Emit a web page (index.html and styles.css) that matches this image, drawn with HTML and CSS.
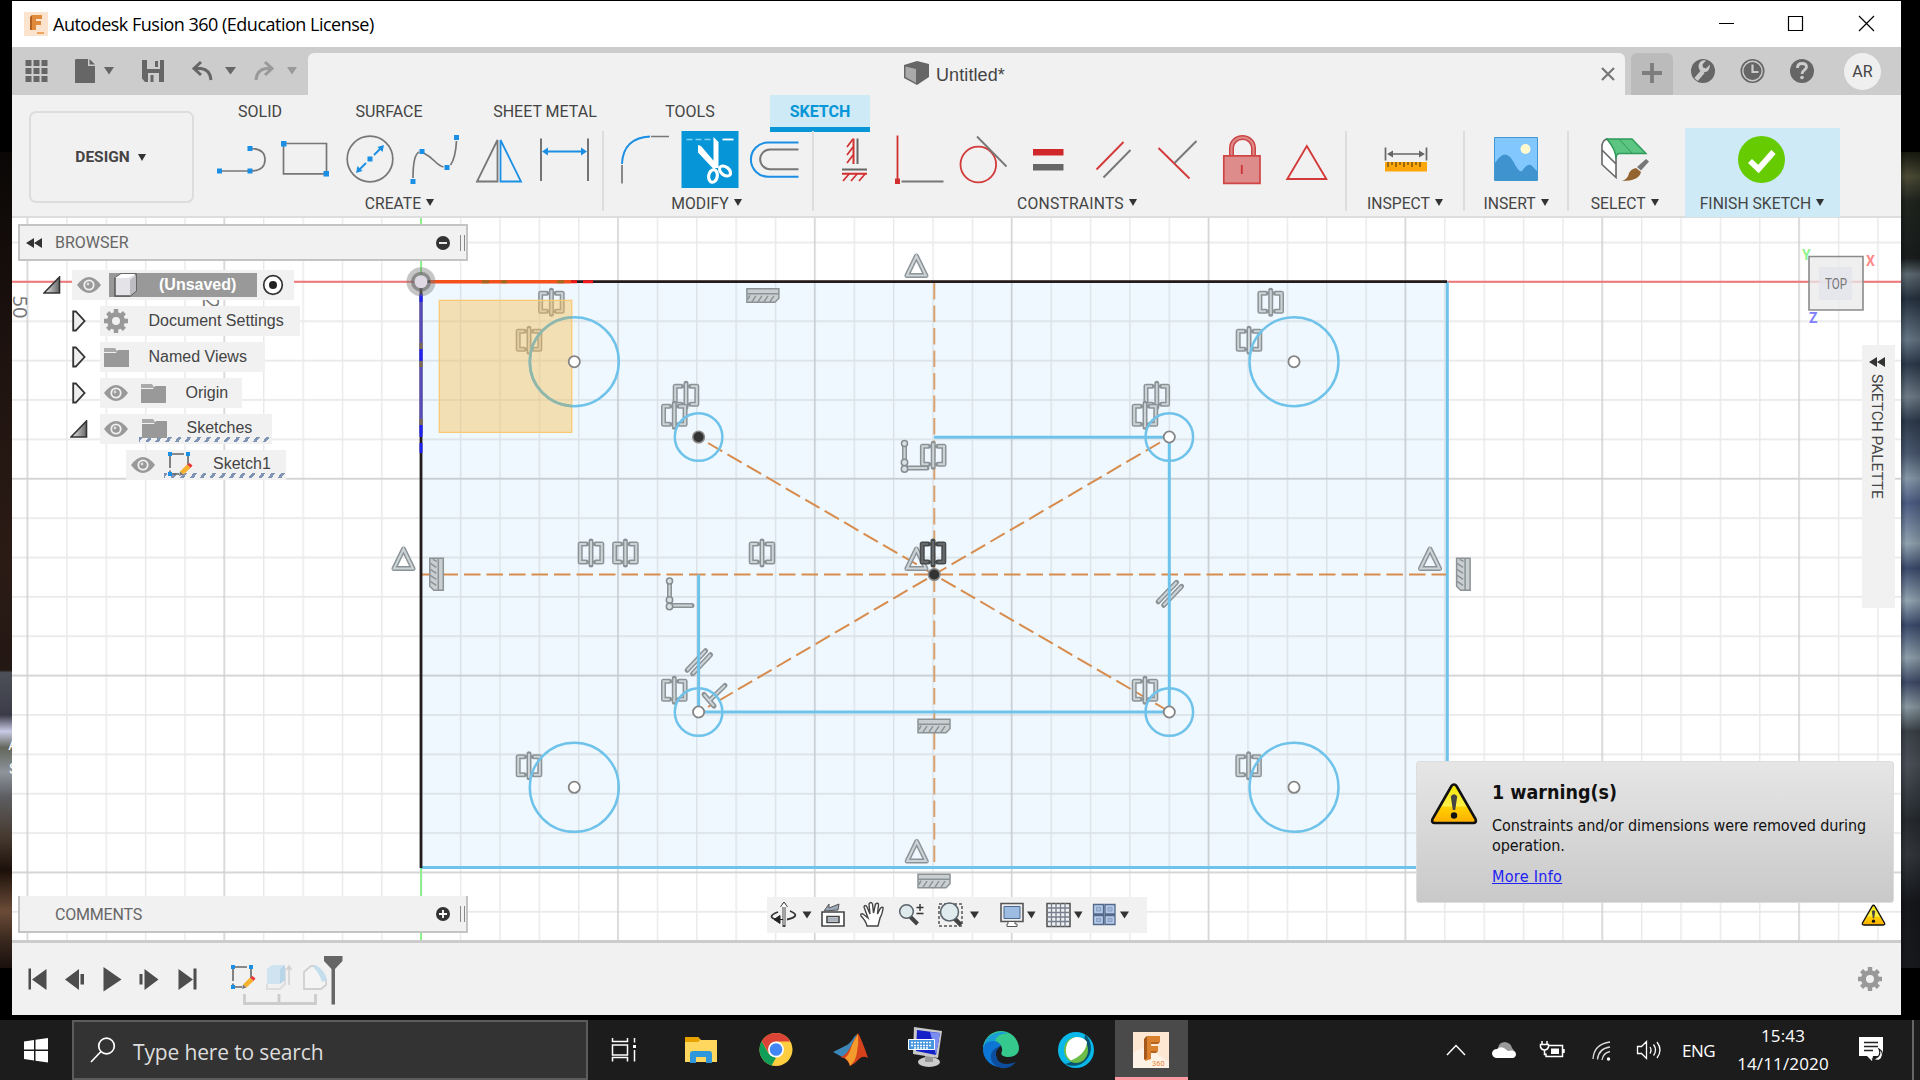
FILE: index.html
```html
<!DOCTYPE html>
<html lang="en">
<head>
<meta charset="utf-8">
<title>Autodesk Fusion 360</title>
<link rel="stylesheet" href="styles.css">
</head>
<body>
<svg class="defs" width="0" height="0" aria-hidden="true">
<defs>
  <linearGradient id="warnFill" x1="0" y1="0" x2="0" y2="1"><stop offset="0" stop-color="#f2e400"/><stop offset=".55" stop-color="#fff04a"/><stop offset=".6" stop-color="#ffd000"/><stop offset="1" stop-color="#ffae00"/></linearGradient>
  <linearGradient id="tri" x1="0" y1="0" x2="1" y2="0"><stop offset="0" stop-color="#eee"/><stop offset="1" stop-color="#666"/></linearGradient>
  <symbol id="eye" viewBox="0 0 24 16"><path d="M0 8Q6 0 12 0T24 8Q18 16 12 16T0 8Z" fill="#999"/><circle cx="12" cy="8" r="5.6" fill="#f1f1f1"/><circle cx="12" cy="8" r="3.8" fill="#999"/><circle cx="11" cy="7" r="1.4" fill="#ddd"/></symbol>
  <symbol id="folder" viewBox="0 0 25 20"><path d="M0 1h11l2 3v1H0Z" fill="#aaa"/><path d="M0 6h12l2-3h11v17H0Z" fill="#999"/></symbol>
  <symbol id="gear" viewBox="-12 -12 24 24"><circle r="6.5" fill="none" stroke="#999" stroke-width="5"/><g stroke="#999" stroke-width="4.4"><path d="M0-12v4M0 12v-4M-12 0h4M12 0h-4M-8.4-8.4l3 3M8.4 8.4l-3-3M-8.4 8.4l3-3M8.4-8.4l-3 3"/></g></symbol>
  <symbol id="closed" viewBox="0 0 14 22"><path d="M1.2 1.5h2.6L12.6 11 3.8 20.500H1.200Z" fill="#eee" stroke="#333" stroke-width="1.8"/></symbol>
  <symbol id="open" viewBox="0 0 18 18"><path d="M1 17 16.500 1V17Z" fill="url(#tri)" stroke="#333" stroke-width="1.600"/></symbol>
  <symbol id="warn" viewBox="0 0 48 43"><path d="M24 2.500Q25.500 2.500 26.500 4L45.500 37Q47 41 43 41H5Q1 41 2.500 37L21.500 4Q22.500 2.500 24 2.500Z" fill="url(#warnFill)" stroke="#111" stroke-width="2.600"/><path d="M20.800 14.500Q24 10 27.200 14.500L25.200 28H22.800Z" fill="#444"/><circle cx="24" cy="33.500" r="3.200" fill="#111"/></symbol>
  <symbol id="sketchico" viewBox="0 0 25 25"><path d="M2 2h18M2 2v20M20 2v12M2 22h9" fill="none" stroke="#666" stroke-width="1.600" stroke-dasharray="14 2.500"/><path d="M0 0h4v4H0ZM18 0h4v4h-4ZM0 20h4v4H0Z" fill="#1a8fe3"/><path d="M12 19.500 19 12.500 22.500 16 15.500 22.500Z" fill="#f9b22d"/><path d="M19.500 12.500 21.500 11 24.500 13.500 22.500 16Z" fill="#e33"/><path d="M12 19.500 15.500 22.500 11 24Z" fill="#777"/></symbol>
  <symbol id="rewind" viewBox="0 0 16 10"><path d="M8 0V10L0 5ZM16 0V10L8 5Z" fill="#333"/></symbol>
  <g id="sym"><path class="go" d="M-4.800-9H-10.800V9H-4.800M4.800-9H10.800V9H4.800M0-12V12"/><path class="gi" d="M-4.800-9H-10.800V9H-4.800M4.800-9H10.800V9H4.800M0-12V12"/></g>
  <g id="mid"><path class="go" d="M0-9.500 9.500 10H-9.500Z"/><path class="gi" d="M0-9.500 9.500 10H-9.500Z"/></g>
  <g id="hor"><path d="M-16-6.500H16V3L12 7H-16Z" fill="#c9cfd1" stroke="#8b9396" stroke-width="1.500"/><path d="M-16-1.500H16M-11 6.500l4-6M-5 6.500l4-6M1 6.500l4-6M7 6.500l4-6M-15 4l2-4" stroke="#8b9396" stroke-width="1.500"/></g>
  <g id="lshape"><path class="go" d="M-10-13V7M-10 11.500H12.500"/><path class="gi" d="M-10-13V7M-10 11.500H12.500"/><g fill="#d8e0e3" stroke="#858d90" stroke-width="1.500"><circle cx="-10" cy="-13" r="3"/><circle cx="-10" cy="6" r="3.200"/><circle cx="-10" cy="12.500" r="3.200"/></g></g>
  <g id="par"><path class="go" d="M-11.500 8.500 7-11M-6 12 12-7"/><path class="gi" d="M-11.500 8.500 7-11M-6 12 12-7"/></g>
  <g id="perp"><path class="go" d="M-10-2.500 0 9M-4 3 11-11.500"/><path class="gi" d="M-10-2.500 0 9M-4 3 11-11.500"/></g>
  <pattern id="minor" x="26.800" y="5.400" width="39.370" height="39.370" patternUnits="userSpaceOnUse"><path d="M.6 0V39.370M0 .9H39.370" stroke="#000" stroke-opacity=".085" stroke-width="1.600"/></pattern>
  <pattern id="major" x="26.400" y="84.100" width="196.850" height="196.850" patternUnits="userSpaceOnUse"><path d="M.9 0V196.850M0 .9H196.850" stroke="#000" stroke-opacity=".1" stroke-width="1.600"/></pattern>
</defs>
</svg>

<div class="desktop">
  <div class="wall wall-left"><span>A</span><span>S</span></div>
  <main class="window">
    <header class="titlebar">
      <svg class="app-icon" width="24" height="24" viewBox="0 0 24 24"><rect width="24" height="24" fill="#fbe3cd"/><path d="M8 3h10v4h-6v2h5v4h-5v5H7V5Z" fill="#e08a3c"/><path d="M8 3v15H6V5Z" fill="#b5601c"/><path d="M13 20h7v2h-7Z" fill="#f0a45c"/></svg>
      <h1>Autodesk Fusion 360 (Education License)</h1>
      <svg class="winctl" width="190" height="46" viewBox="1711 1 190 46" fill="none" stroke="#000" stroke-width="1.200"><path d="M1719 23.500h15M1788.500 16.500h14v14h-14ZM1859 16l15 15M1874 16l-15 15"/></svg>
    </header>

    <div class="tabbar">
      <svg width="296" height="48" viewBox="12 47 296 48" fill="#666"><path d="M25.500 60h6v6h-6Zm8 0h6v6h-6Zm8 0h6v6h-6Zm-16 8h6v6h-6Zm8 0h6v6h-6Zm8 0h6v6h-6Zm-16 8h6v6h-6Zm8 0h6v6h-6Zm8 0h6v6h-6Z"/><path d="M76 59h12v7h7v17H75V60ZM89.500 59l5.500 5.500h-5.500Z"/><path d="M104 67h10l-5 7.500ZM225 67h11l-5.500 7.500Z"/><path fill-rule="evenodd" d="M142 60h22v22h-19l-3-3.500ZM147 60v9h13v-9ZM148 73v9h11v-9ZM155 61v6h3v-6ZM150.500 75h3v7h-3Z"/><g fill="none" stroke="#666" stroke-width="3"><path d="M201 62l-7 6.500 7 6.500M194 68.500h7q9 1 10 11.500"/><path stroke="#999" d="M265 62l7 6.500-7 6.500M272 68.500h-6q-9 1-10 11.500"/></g><path d="M287 67h10l-5 7.500Z" fill="#999"/></svg>
      <div class="doc-tab">
        <svg class="cube" width="25" height="24" viewBox="0 0 25 24"><path d="M0 4 13 0 25 3V16L13 24 0 17Z" fill="#666"/><path d="M1.500 5.500 12 8V22L1.500 16Z" fill="#aaa"/></svg>
        <span>Untitled*</span>
        <svg class="tab-x" width="14" height="14" viewBox="0 0 14 14"><path d="M1 1l12 12M13 1 1 13" stroke="#777" stroke-width="2.200"/></svg>
      </div>
      <div class="new-tab"><svg width="20" height="20" viewBox="0 0 20 20"><path d="M10 0v20M0 10h20" stroke="#7d7d7d" stroke-width="3.800"/></svg></div>
      <svg width="146" height="48" viewBox="1685 47 146 48"><circle cx="1703" cy="71" r="12" fill="#666"/><path d="M1696 79.500l7-8" stroke="#ccc" stroke-width="4.500"/><path d="M1710 64.500l-4 4-3-1-.5-3 3.500-4q-6-1-7.500 5 0 6 5 6.500 6 1 6.500-7.500Z" fill="#ccc"/><circle cx="1752.500" cy="71" r="11.200" fill="none" stroke="#666" stroke-width="1.600"/><circle cx="1752.500" cy="71" r="9" fill="#666"/><path d="M1752.500 64.500v7.500h6" fill="none" stroke="#ccc" stroke-width="2.200"/><circle cx="1802" cy="71" r="12" fill="#666"/><path d="M1797.500 68q0-4.500 4.500-4.500t4.500 3.500c0 3-4.500 3-4.500 7" fill="none" stroke="#ccc" stroke-width="2.800"/><circle cx="1802" cy="77.500" r="1.800" fill="#ccc"/></svg>
      <div class="avatar">AR</div>
    </div>

    <section class="ribbon">
      <div class="workspace">DESIGN<i class="caret"></i></div>
      <div class="ribbon-main">
        <nav class="ribbon-tabs"><span class="t1">SOLID</span><span class="t2">SURFACE</span><span class="t3">SHEET METAL</span><span class="t4">TOOLS</span><span class="t5">SKETCH</span></nav>
        <div class="groups">
          <div class="group create">
            <div class="icons">
              <svg viewBox="210 131 64.500 57"><path d="M220 171h28M250 148.500q15 0 15 11.200T250 171" fill="none" stroke="#777" stroke-width="1.700"/><path d="M217 168.500h5v5h-5ZM247.500 168.500h5v5h-5ZM247.500 146h5v5h-5Z" fill="#1a8fe3"/></svg>
              <svg viewBox="274.500 131 64.500 57"><path d="M284 143.500h43v30.300h-43Z" fill="none" stroke="#777" stroke-width="1.700"/><path d="M281.500 141h5.500v5.500h-5.500ZM324 171h5.500v5.500H324Z" fill="#1a8fe3"/></svg>
              <svg viewBox="339 131 64.500 57"><circle cx="370" cy="159" r="22.800" fill="none" stroke="#777" stroke-width="1.700"/><path d="M359 170l7-7M374 155l7-7" stroke="#1a8fe3" stroke-width="1.800"/><path d="M384 145l-1.500 7-5-5ZM356 173l1.500-7 5 5ZM367.500 156.500h5v5h-5Z" fill="#1a8fe3"/></svg>
              <svg viewBox="403.500 131 64.500 57"><path d="M413.500 178q0-23 6-26M424 153q6 3 11 8t9 6M451 165q5-7 6-24" fill="none" stroke="#777" stroke-width="1.700"/><path d="M411 179h5v5h-5ZM420 149h5v5h-5ZM445 165h5v5h-5ZM454.500 135h5v5h-5Z" fill="#1a8fe3"/></svg>
              <svg viewBox="468 131 64.500 57" fill="none" stroke-width="1.800"><path d="M497.500 140V181.500h-20.500Z" stroke="#777"/><path d="M500.500 140V181.500H521Z" stroke="#1a8fe3"/></svg>
              <svg viewBox="532 131 64.500 57"><path d="M541 138.500V181M588 138.500V181" stroke="#666" stroke-width="1.800"/><path d="M545 151.500h39" stroke="#1a8fe3" stroke-width="1.800"/><path d="M542 151.500l6-4v8ZM587 151.500l-6-4v8Z" fill="#1a8fe3"/></svg>
            </div>
            <div class="label">CREATE<i class="caret"></i></div>
          </div>
          <div class="group modify">
            <div class="icons">
              <svg viewBox="613 131 64.500 57" fill="none"><path d="M622 165V183.500M651 136.500h18" stroke="#777" stroke-width="1.700"/><path d="M622 164q1-26 28-27.500" stroke="#1a8fe3" stroke-width="1.900"/></svg>
              <svg viewBox="677.500 131 64.500 57"><path d="M681 131h57v57h-57Z" fill="#0696d7"/><path d="M686 139.500h28" stroke="#7fd0f5" stroke-width="1.600" stroke-dasharray="6 3"/><path d="M722 139.500h11" stroke="#fff" stroke-width="1.800"/><path d="M713 137l5 5v26h-5ZM697.500 145l3 1 17 20-4 3.500-16-17Z" fill="#fff"/><g fill="none" stroke="#fff" stroke-width="3.200"><ellipse cx="712.500" cy="176" rx="4.300" ry="6.300" transform="rotate(10 712.500 176)"/><ellipse cx="724.500" cy="171" rx="4" ry="6.300" transform="rotate(-52 724.500 171)"/></g></svg>
              <svg viewBox="742 131 64.500 57" fill="none"><path d="M798.500 142.500H768a17 17 0 0 0 0 34.200h30.500" stroke="#1a8fe3" stroke-width="2"/><path d="M798.500 149.500H770a9.800 9.800 0 0 0 0 19.700h28.500" stroke="#777" stroke-width="2"/></svg>
            </div>
            <div class="label">MODIFY<i class="caret"></i></div>
          </div>
          <div class="group constraints">
            <div class="icons">
              <svg viewBox="822 131 64.500 57" fill="none"><path d="M853.500 138.500V164M842 173.800h25" stroke="#d0302f" stroke-width="2"/><path d="M857.500 138.500V164M842 169.500h25" stroke="#666" stroke-width="2"/><path d="M853 139l-6 8M853 147l-6 8M853 155l-6 8M849 174l-6 7M857 174l-6 7M865 174l-6 7" stroke="#d0302f" stroke-width="1.700"/></svg>
              <svg viewBox="886.500 131 64.500 57"><path d="M898 135.500V179" stroke="#d0302f" stroke-width="1.800"/><path d="M902 181.500h42" stroke="#777" stroke-width="1.800"/><path d="M895.500 178.500h5v5.500h-5Z" fill="#d0302f"/></svg>
              <svg viewBox="951 131 64.500 57" fill="none"><circle cx="978.300" cy="164.500" r="17.800" stroke="#d33a3a" stroke-width="1.800"/><path d="M977 136.500l29.500 30" stroke="#777" stroke-width="1.800"/></svg>
              <svg viewBox="1015.500 131 64.500 57"><path d="M1033.500 149h30.500v6.500h-30.500Z" fill="#d0282a"/><path d="M1033.500 164h30.500v6.500h-30.500Z" fill="#666"/></svg>
              <svg viewBox="1080 131 64.500 57" stroke-width="1.900"><path d="M1096.500 169.500l27-27.500" stroke="#d33a3a"/><path d="M1103.500 177.500l27-27.500" stroke="#777"/></svg>
              <svg viewBox="1144.500 131 64.500 57" stroke-width="1.900"><path d="M1159 148l31 30.500" stroke="#d33a3a"/><path d="M1175 163l22-22" stroke="#777"/></svg>
              <svg viewBox="1209 131 64.500 57"><path d="M1231.500 156V148a11 10.500 0 0 1 22 0v8" fill="none" stroke="#cc4444" stroke-width="5"/><path d="M1231.500 156V148a11 10.500 0 0 1 22 0v8" fill="none" stroke="#df8a8a" stroke-width="2"/><path d="M1223.800 155.800h36.200v27.500h-36.200Z" fill="#de8b8b" stroke="#d04545" stroke-width="1.700"/><path d="M1241.800 165v9" stroke="#c33" stroke-width="1.800"/></svg>
              <svg viewBox="1273 131 64.500 57"><path d="M1306.800 146l19.500 33h-39Z" fill="none" stroke="#d33a3a" stroke-width="1.900"/></svg>
            </div>
            <div class="label">CONSTRAINTS<i class="caret"></i></div>
          </div>
          <div class="group inspect">
            <div class="icons"><svg viewBox="1373 131 64.500 57"><path d="M1385.500 147.500v13M1426.500 147.500v13M1389 154h34" stroke="#666" stroke-width="1.700"/><path d="M1387 154l6-3.500v7ZM1425 154l-6-3.500v7Z" fill="#666"/><path d="M1385 162h42v9.500h-42Z" fill="#ffa60a"/><path d="M1388 162v5m4-5v3m4-3v5m4-5v3m4-3v5m4-5v3m4-3v5m4-5v3m4-3v5" stroke="#6a4a10" stroke-width="1.300"/></svg></div>
            <div class="label">INSPECT<i class="caret"></i></div>
          </div>
          <div class="group insert">
            <div class="icons"><svg viewBox="1484 131 64.500 57"><path d="M1494.500 137.500h43v43h-43Z" fill="#82c8ff" stroke="#4597cf"/><circle cx="1525.500" cy="149" r="5" fill="#fff9d0"/><path d="M1495 163q10-16 18-2 6 12 9 10 6-9 10-5l5 5v9.500h-42Z" fill="#3f93cf"/></svg></div>
            <div class="label">INSERT<i class="caret"></i></div>
          </div>
          <div class="group select">
            <div class="icons"><svg viewBox="1595 131 64.500 57"><path d="M1602 145q1-5 5-6 8 9 9 15v23.500l-14-13ZM1602 150l14 14" fill="#fff" stroke="#666" stroke-width="1.600"/><path d="M1607 139h25l14 14.500h-26q-4 0-4 5Q1616 150 1607 139Z" fill="#5cc581" stroke="#2f9a5a" stroke-width="1.400"/><path d="M1619 139l13 14" stroke="#2f9a5a"/><path d="M1637 167l9-8 3 2.500-8 9Z" fill="#777"/><path d="M1636 168l5 4q-2 9-19 9 6-2 7-8 2-4 7-5Z" fill="#946430"/></svg></div>
            <div class="label">SELECT<i class="caret"></i></div>
          </div>
          <div class="group finish">
            <div class="icons"><svg viewBox="1729.500 131 64.500 57"><circle cx="1761" cy="159.500" r="23.500" fill="#66cb00"/><path d="M1749.500 161l8.500 8 15-17" fill="none" stroke="#fff" stroke-width="5.800"/></svg></div>
            <div class="label">FINISH SKETCH<i class="caret"></i></div>
          </div>
        </div>
      </div>
    </section>

    <section class="canvas">
      <svg class="sketch" width="1889" height="722" viewBox="12 218 1889 722">
        <g class="ruler"><text transform="translate(12.500 295.500) rotate(90)" font-size="20">50</text><text transform="translate(203 296) rotate(90)" font-size="22">2</text></g>
        <path d="M420.800 281.700H1447.300V867.500H420.800Z" fill="#eff8fe"/>
        <path d="M12 218H1901V940H12Z" fill="url(#minor)"/>
        <path d="M12 218H1901V940H12Z" fill="url(#major)"/>
        <path d="M12 281.700H1901" stroke="#ef7777" stroke-width="2"/>
        <path d="M421 218V940" stroke="#8cf08c" stroke-width="2"/>
        <g fill="none" stroke="#d78c4e" stroke-width="2">
          <path d="M421 574.500H1447" stroke-dasharray="16.500 6" stroke-dashoffset="2"/>
          <path d="M934.300 283V866" stroke-dasharray="16.500 6" stroke="#d9a06f"/>
          <path d="M1160 442.500L708 707" stroke-dasharray="16.500 6"/><path d="M708 443L1165 709" stroke-dasharray="16.500 6"/>
        </g>
        <g>
          <use href="#sym" x="551.400" y="302.300"/><use href="#sym" x="529" y="340.300"/><use href="#sym" x="686" y="395.300"/><use href="#sym" x="674.300" y="415.300"/><use href="#sym" x="933.200" y="455.300"/><use href="#sym" x="591" y="553"/><use href="#sym" x="625.400" y="553"/><use href="#sym" x="762" y="553"/><use href="#sym" x="674.300" y="690.300"/><use href="#sym" x="1270.700" y="302.300"/><use href="#sym" x="1249" y="340.300"/><use href="#sym" x="1156.800" y="395.300"/><use href="#sym" x="1145" y="415.300"/><use href="#sym" x="1145" y="690.300"/><use href="#sym" x="529" y="765.700"/><use href="#sym" x="1248.600" y="765.700"/>
          <use href="#mid" x="916.400" y="265.500"/><use href="#mid" x="403.500" y="558.500"/><use href="#mid" x="916.400" y="558.500"/><use href="#mid" x="1430" y="558.500"/><use href="#mid" x="916.700" y="851"/>
          <use class="strong" href="#sym" x="933" y="553"/>
          <use href="#hor" x="762.900" y="295.300"/><use href="#hor" x="934" y="725.700"/><use href="#hor" x="934" y="880.700"/><use href="#hor" transform="translate(436.800 574.300) rotate(90)"/><use href="#hor" transform="translate(1463.600 574.300) rotate(90)"/>
          <use href="#lshape" x="914.500" y="456.500"/><use href="#lshape" x="679.500" y="594"/>
          <use href="#par" x="698.600" y="661.700"/><use href="#par" x="1169.600" y="593.300"/><use href="#perp" x="714" y="697"/>
        </g>
        <path d="M439.300 300.300H571.800V432.300H439.300Z" fill="#f9c15c" fill-opacity=".45" stroke="#f9c870" stroke-width="1.200"/>
        <g fill="none" stroke="#6fc3ea" stroke-width="2.500">
          <circle cx="574.300" cy="361.700" r="44.500"/><circle cx="1294" cy="361.700" r="44.500"/><circle cx="574.300" cy="787.300" r="44.500"/><circle cx="1294" cy="787.300" r="44.500"/>
          <circle cx="698.600" cy="437" r="23.800"/><circle cx="1169.300" cy="437" r="23.800"/><circle cx="698.600" cy="712" r="23.800"/><circle cx="1169.300" cy="712" r="23.800"/>
          <path d="M934 437.300H1169.300V712H698.600V574.500M420.800 867.500H1447.300V281.700" stroke-width="3"/>
        </g>
        <path d="M571.800 317.270A44.500 44.500 0 0 0 529.800 361.700A44.500 44.500 0 0 0 571.800 406.130" fill="none" stroke="#92b7a8" stroke-width="2.700"/>
        <path d="M421 868V281.700H1447" fill="none" stroke="#221c1c" stroke-width="2.800"/>
        <path d="M421 294V433" stroke="#564bb8" stroke-width="3"/><path d="M421 294v8M421 349v12M421 425v12M421 443v10" stroke="#2020f0" stroke-width="3"/><path d="M421 343v6M421 361v6M421 419v6" stroke="#7a6a50" stroke-width="3"/>
        <path d="M430 281.700H571" stroke="#f4501c" stroke-width="3.600"/><path d="M571 281.700h22" stroke="#f01818" stroke-width="3" stroke-dasharray="6 6 10"/><path d="M482 281.700h7M501 281.700h6M557 281.700h7" stroke="#a06a20" stroke-width="3"/>
        <circle cx="421" cy="281.700" r="14.500" fill="#777" fill-opacity=".42"/><circle cx="421" cy="281.700" r="10" fill="#666" fill-opacity=".6"/><circle cx="421" cy="281.700" r="6.500" fill="#ded9e3"/>
        <g fill="#fff" stroke="#858585" stroke-width="1.800"><circle cx="574.300" cy="361.700" r="5.600"/><circle cx="1294" cy="361.700" r="5.600"/><circle cx="574.300" cy="787.300" r="5.600"/><circle cx="1294" cy="787.300" r="5.600"/><circle cx="1169.300" cy="437" r="5.600"/><circle cx="698.600" cy="712" r="5.600"/><circle cx="1169.300" cy="712" r="5.600"/></g>
        <g fill="#333" stroke="#888" stroke-width="1.500"><circle cx="698.600" cy="437" r="5.800"/><circle cx="934.200" cy="574.500" r="5.800"/></g>
      </svg>

      <aside class="browser">
        <div class="panel-head"><svg width="16" height="10"><use href="#rewind"/></svg><span>BROWSER</span><svg class="knob" width="14" height="14" viewBox="-7 -7 14 14"><circle r="7" fill="#333"/><path d="M-4 0h8" stroke="#fff" stroke-width="1.800"/></svg><b class="grip"></b></div>
        <ul class="tree">
          <li class="r1"><svg width="18" height="18"><use href="#open"/></svg><div class="node"><svg width="24" height="16"><use href="#eye"/></svg><span class="picked"><svg width="26" height="24" viewBox="0 0 26 24"><path d="M2 5 8 1h15v17l-6 5H2Z" fill="#e4e4e8" stroke="#555" stroke-width="1.500"/><path d="M2 5h13l8-4H8Z" fill="#fff"/><path d="M17 7l6-5v16l-6 5Z" fill="#bcbcc2"/></svg><b>(Unsaved)</b></span><svg width="22" height="22" viewBox="-11 -11 22 22"><circle r="9.300" fill="#fff" stroke="#333" stroke-width="1.700"/><circle r="4" fill="#222"/></svg></div></li>
          <li class="r2"><svg width="14" height="22"><use href="#closed"/></svg><div class="node"><svg width="24" height="24"><use href="#gear"/></svg><span>Document Settings</span></div></li>
          <li class="r3"><svg width="14" height="22"><use href="#closed"/></svg><div class="node"><svg width="25" height="20"><use href="#folder"/></svg><span>Named Views</span></div></li>
          <li class="r4"><svg width="14" height="22"><use href="#closed"/></svg><div class="node"><svg width="24" height="16"><use href="#eye"/></svg><svg width="25" height="20"><use href="#folder"/></svg><span>Origin</span></div></li>
          <li class="r5"><svg width="18" height="18"><use href="#open"/></svg><div class="node"><svg width="24" height="16"><use href="#eye"/></svg><div class="dashed"><svg width="25" height="20"><use href="#folder"/></svg><span>Sketches</span></div></div></li>
          <li class="r6"><div class="node"><svg width="24" height="16"><use href="#eye"/></svg><div class="dashed"><svg width="25" height="25"><use href="#sketchico"/></svg><span>Sketch1</span></div></div></li>
        </ul>
      </aside>

      <div class="panel-head comments"><span>COMMENTS</span><svg class="knob" width="14" height="14" viewBox="-7 -7 14 14"><circle r="7" fill="#333"/><path d="M-4 0h8M0-4v8" stroke="#fff" stroke-width="1.800"/></svg><b class="grip"></b></div>

      <svg class="viewcube" width="84" height="90" viewBox="1798 240 84 90"><path d="M1809 256.500h54v53.500h-54Z" fill="#eaeaea" fill-opacity=".75" stroke="#8a8a8a" stroke-width="1.600"/><path d="M1819 267h33v33h-33Z" fill="#e3e4ec" fill-opacity=".8"/><text x="1825" y="289" font-size="15" fill="#777" textLength="22" lengthAdjust="spacingAndGlyphs">TOP</text><g font-size="14" font-weight="700"><text x="1802" y="260" fill="#8df58d">Y</text><text x="1866" y="266" fill="#ff8a8a">X</text><text x="1809" y="323" fill="#8080ff">Z</text></g></svg>

      <aside class="palette"><svg width="16" height="10"><use href="#rewind"/></svg><span>SKETCH PALETTE</span></aside>

      <div class="navbar">
        <svg width="48" height="36" viewBox="767 897 48 36"><path d="M784 903v24" stroke="#444" stroke-width="3"/><path d="M784 904v21" stroke="#fff"/><path d="M780.500 907l3.500-5 3.500 5" fill="#fff" stroke="#444"/><path d="M778 912q-13 5 0 8M790 911q12 5-3 8.500" fill="none" stroke="#333" stroke-width="1.800"/><path d="M783 919.500h-8M774 919.500l6-4v8Z" fill="#222" stroke="#222"/><path d="M802.500 911.500h9l-4.500 7Z" fill="#333"/></svg>
        <svg width="40" height="36" viewBox="815 897 40 36"><path d="M822 912h22v14h-22ZM827 916.500h12v6h-12Z" fill="#fff" stroke="#444" stroke-width="1.600"/><path d="M828 917.500h10v4h-10Z" fill="#aab2bd"/><path d="M824 911l5-7v4l10-4-1 6Z" fill="#9aa8ba" stroke="#555"/></svg>
        <svg width="38" height="36" viewBox="855 897 38 36"><path d="M867 926q-1-5-6-10-1-3 2-2l5 4-4-11q1-3 3 0l3 7-1-10q2-3 3.500 0l1 9 2-9q3-2 3 1l-1 9 3-6q3-2 2.500 1-1 6-3 9l-2 8Z" fill="#fff" stroke="#444" stroke-width="1.400"/></svg>
        <svg width="40" height="36" viewBox="893 897 40 36"><path d="M910 916.500l7.500 7.500" stroke="#444" stroke-width="4"/><circle cx="906.500" cy="911.500" r="6.800" fill="#dfeaec" stroke="#59636b" stroke-width="1.500"/><path d="M920 904v7M916.500 907.500h7M916.500 913.500h7" stroke="#333" stroke-width="1.400"/></svg>
        <svg width="60" height="36" viewBox="933 897 60 36"><path d="M939 904h23v22h-23Z" fill="none" stroke="#555" stroke-width="1.500" stroke-dasharray="3 2"/><path d="M954 918l7 7" stroke="#444" stroke-width="4.500"/><circle cx="949.500" cy="912" r="9" fill="#dfebed" stroke="#59636b" stroke-width="1.500"/><path d="M970 911.500h9l-4.500 7Z" fill="#333"/></svg>
        <svg width="50" height="36" viewBox="993 897 50 36"><path d="M1001 903.500h22v18h-22Z" fill="#eee" stroke="#555" stroke-width="1.600"/><path d="M1004 906.500h16v12h-16Z" fill="#9dbce2" stroke="#4b6890"/><path d="M1008 922v2h-1v2.500h10V924h-2v-2" fill="#fff" stroke="#555"/><path d="M1027 911.500h8.500l-4 7Z" fill="#333"/></svg>
        <svg width="46" height="36" viewBox="1043 897 46 36"><path d="M1047 903.500h23v23h-23Z" fill="#eef0f3" stroke="#555" stroke-width="1.600"/><path d="M1051.500 903v24m4.500-24v24m4.500-24v24m4.500-24v24M1047 908h23m-23 4.500h23m-23 4.500h23m-23 4.500h23" stroke="#777f8c" stroke-width="1.300"/><path d="M1074 911.500h8.500l-4 7Z" fill="#333"/></svg>
        <svg width="58" height="36" viewBox="1089 897 58 36"><path d="M1093.500 904.500h10v9.500h-10ZM1105 904.500h10v9.500h-10ZM1093.500 915.500h10v9h-10ZM1105 915.500h10v9h-10Z" fill="#b4c9e6" stroke="#54698c" stroke-width="1.300"/><path d="M1096.500 907.500h4v3.500h-4ZM1108 907.500h4v3.500h-4ZM1096.500 918.500h4v3h-4ZM1108 918.500h4v3h-4Z" fill="#a3bbdd" stroke="#7d96bd" stroke-width=".8"/><path d="M1120 911.500h9l-4.500 7Z" fill="#333"/></svg>
      </div>

      <div class="warning">
        <svg width="48" height="43"><use href="#warn"/></svg>
        <div><h2>1 warning(s)</h2><p>Constraints and/or dimensions were removed during<br>operation.</p><a>More Info</a></div>
      </div>
      <svg class="mini-warn" width="25" height="22"><use href="#warn"/></svg>
    </section>

    <footer class="timeline">
      <svg width="400" height="71" viewBox="12 943 400 71"><g fill="#4d4d4d"><path d="M28.500 968.500h2.500v21h-2.500ZM46.500 969v21l-14.500-10.500ZM79 969v21l-14-10.500ZM80.500 974h3.500v10.500h-3.500ZM103.500 967l18 12.500-18 12ZM139.500 974h3v10.500h-3ZM144.500 969v21l14-10.500ZM178.500 969v21l14.500-10.500ZM193.500 968.500h3v21h-3Z"/></g><use href="#sketchico" x="231" y="965" width="25" height="25"/><path d="M267 984v5h13l5-5V968" fill="none" stroke="#ddd" stroke-width="2"/><path d="M267 969l5-4h13v15l-5 4h-13Z" fill="#cfe3f1"/><path d="M280 984v-15l5-4v15Z" fill="#b9d6e9"/><path d="M289 966.500V985M286.500 970l2.500-4 2.500 4" fill="none" stroke="#d0d0d0" stroke-width="1.500"/><path d="M304 972l7-6h4q8 4 11 14v5l-5 4h-17Z" fill="#f4f4f4" stroke="#d0d0d0" stroke-width="1.800"/><path d="M312 966h5q8 5 10 14l-5 2q-3-10-10-16Z" fill="#c5deed"/><path d="M244.500 994v9.500h71V994M279 994v9" fill="none" stroke="#ccc" stroke-width="2.800"/><path d="M324 956h18.500v5l-7.500 8v35.500h-3.500V969l-7.500-8Z" fill="#666"/></svg>
      <svg class="tl-gear" width="24" height="24"><use href="#gear"/></svg>
    </footer>
  </main>
  <div class="wall wall-right"></div>

  <footer class="taskbar">
    <svg width="72" height="60" viewBox="0 1020 72 60"><path d="M24 1041.500l10-1.500v9.500H24ZM35.500 1039.800l12.500-1.800v11.500H35.500ZM24 1051h10v9.500l-10-1.500ZM35.500 1051H48v11.500l-12.500-1.800Z" fill="#fff"/></svg>
    <div class="search"><svg width="26" height="26" viewBox="0 0 26 26" fill="none" stroke="#fff" stroke-width="1.700"><circle cx="16.500" cy="9" r="7.800"/><path d="M11 14.500 1 25"/></svg><span>Type here to search</span></div>
    <svg width="74" height="60" viewBox="588 1020 74 60" fill="none" stroke="#fff" stroke-width="1.500"><path d="M612.500 1038v3.500h15V1038M612.500 1061.500V1057.500h15v4M612.500 1045h15v10h-15ZM634.500 1038v4.500M634.500 1050v11.500"/><path d="M633 1045h3v3h-3Z" fill="#fff" stroke="none"/></svg>
    <svg width="76" height="60" viewBox="662 1020 76 60"><path d="M685 1037h13l3 3h16v22h-32Z" fill="#ffd75e"/><path d="M685 1037h13l2 3-2 2h-13Z" fill="#e8a200"/><path d="M690 1063v-9q0-3 3-3h16q3 0 3 3v9h-6v-6h-10v6Z" fill="#2f97dc"/></svg>
    <svg width="75" height="60" viewBox="738 1020 75 60"><circle cx="776" cy="1049.500" r="16.500" fill="#ffcd40"/><path d="M761.700 1041.200L768.900 1054 776 1057.800 771.500 1065.400A16.500 16.500 0 0 1 761.700 1041.200Z" fill="#0f9d58"/><path d="M761.700 1041.200A16.500 16.500 0 0 1 790.300 1041.500H776L769 1053.500Z" fill="#db4437"/><circle cx="776" cy="1049.500" r="8" fill="#fff"/><circle cx="776" cy="1049.500" r="6.300" fill="#4285f4"/></svg>
    <svg width="74" height="60" viewBox="813 1020 74 60"><path d="M833 1052l12-6q5-2 9-9l3-3-3 18-10 6Z" fill="#3d87b8"/><path d="M840 1057q7-1 13-15l5-9q4 7 10 25-5-3-9 1-4 5-9 7-2-6-6-8Z" fill="#d6421c"/><path d="M852 1045q4-8 6-11 1 9-1 18-1 9-7 14-1-5-5-8 4-3 7-13Z" fill="#f39b2c"/></svg>
    <svg width="75" height="60" viewBox="887 1020 75 60"><ellipse cx="929" cy="1062" rx="11" ry="5" fill="#ccc"/><path d="M925 1054h8v8h-8Z" fill="#999"/><path d="M914 1027l28 4-4 27-25-4Z" fill="#c8c8c8"/><path d="M917 1030l23 3-4 22-20-4Z" fill="#1420c8"/><path d="M930 1032l10 1-4 22Z" fill="#7a8df0"/><path d="M908.500 1039.500h26v10h-26Z" fill="#4595df" stroke="#fff" stroke-width="1"/><path d="M911 1042.500h21M911 1045.500h21M914 1048h15" stroke="#fff" stroke-width="1.600" stroke-dasharray="2 1"/></svg>
    <svg width="76" height="60" viewBox="962 1020 76 60"><path d="M983 1050a18 18 0 0 1 36-2c0 7-6 9-10 9-6 0-9-2-7-6 1-6-4-9-9-9-6 0-9 3-10 8Z" fill="#36c98e"/><path d="M983 1050a18 18 0 0 1 25-16.500q-12 0-13 8-9-1-12 8.500Z" fill="#1b9ed8"/><path d="M983 1051q0-10 10-10 6 0 8 5-6 1-5 10 2 11 15 8a18 18 0 0 1-28-13Z" fill="#0d76d4"/><path d="M1001 1047q-6 2-5 9 3 12 20 6-8 9-18 5-8-4-7-12 2-8 10-8Z" fill="#0c4d9e"/></svg>
    <svg width="77" height="60" viewBox="1038 1020 77 60"><circle cx="1076" cy="1050" r="18" fill="#07b8e8"/><path d="M1085 1034.500a18 18 0 0 1-20 29.500Q1083 1060 1085 1034.500Z" fill="#075470"/><ellipse cx="1076" cy="1050" rx="12" ry="13" fill="#6dbd48"/><path d="M1076 1037q8 0 11 5-1 12-16 18.500a12 13 0 0 1 5-23.500Z" fill="#fff"/></svg>
    <div class="task-active"><svg width="36" height="36" viewBox="0 0 36 36"><rect width="36" height="36" fill="#fde6d2"/><path d="M0 20 14 15 36 30V36H0Z" fill="#fdf2e6"/><path d="M14 4h13v6H18v4h7v5h-7v8l-6 2V6Z" fill="#d9812e"/><path d="M14 4v22l-3 2V7Z" fill="#a4581a"/><path d="M18 10h9l-2 2h-7ZM18 19h7l-2 2h-5Z" fill="#b4641f"/><text x="19" y="33.500" font-size="7.500" fill="#ee8336">360</text></svg></div>
    <div class="tray">
      <svg width="244" height="60" viewBox="1436 1020 244 60" fill="none" stroke="#fff" stroke-width="1.500"><path d="M1447 1055l9-9.500 9 9.500"/><path d="M1498 1048q1-6 7-6 6 1 7 6l4 5-12 4Z" fill="#999" stroke="none"/><path d="M1496 1058q-4-1-4-5 1-4 5-4 3-3 7-1l4 3q7-2 8 3 0 3-3 4Z" fill="#fff" stroke="none"/><path d="M1549 1045.500h13.500v11h-16.500v-3M1564 1049v4M1542 1041v3M1547 1041v3M1540.500 1044.500h8v2.500q-1 3-4 3t-4-3ZM1544.500 1050v4.500h2"/><path d="M1551 1048.500h8v5.500h-8Z" fill="#fff" stroke="none"/><path d="M1593 1059q1-15 17-17M1597.500 1059.500q1-11 12.500-12.500M1602 1060q1-7 8-8.500" stroke="#ddd" stroke-width="1.300"/><circle cx="1608.500" cy="1059" r="1.700" fill="#fff" stroke="none"/><path d="M1637.500 1046.500h4l5-5v17l-5-5h-4ZM1650 1047q2 3 0 6.500M1653.500 1044.500q4 5.500 0 11M1657 1042q6 8 0 16" stroke-width="1.300"/></svg>
      <span class="lang">ENG</span>
      <div class="clock"><span>15:43</span><span>14/11/2020</span></div>
      <svg width="24" height="26" viewBox="0 0 24 26"><path d="M0 0h24v19H14l-1 5-5-5H0Z" fill="#fff"/><path d="M5 5.500h14M5 9.500h14M5 13.500h9" stroke="#222" stroke-width="1.400"/><path d="M20 12q3 8-6 10 8 4 9.500-4 0-4-3.500-6Z" fill="#fff" stroke="#1c1c1c" stroke-width="1.200"/></svg>
      <b class="peek"></b>
    </div>
  </footer>
</div>
</body>
</html>
```

FILE: styles.css
```css
* { box-sizing: border-box; }
body { margin: 0; background: #000; font-family: Roboto, "Liberation Sans", sans-serif; font-size: 16px; color: #444; overflow: hidden; }
h1, h2, p, ul { margin: 0; padding: 0; font-weight: normal; }
svg { display: block; flex: none; }
.defs { position: absolute; }
.desktop { display: grid; grid-template: 1020px 60px / 12px 1889px 19px; width: 1920px; height: 1080px; background: #000; }

.wall-left { margin-top: 152px; height: 816px; padding-top: 581px; overflow: hidden; color: #fff; font-size: 15px; line-height: 24px; display: flex; flex-direction: column; align-items: flex-end;
  background: linear-gradient(#0a0706, #1e130f 25%, #2b1b15 50%, #241814 63.500%, #4d5058 63.800%, #3b3b48 69%, #c9cbe6 71%, #63665a 73%, #8d949b 76%, #5d5e62 79%, #46392f 84%, #1c100a 88%, #6b4c38 93%, #35251c 97%, #1a100c); }
.wall-left span { margin-right: -6px; }
.wall-right { margin-top: 152px; height: 816px; background:
  linear-gradient(90deg, rgba(0,0,0,.25), transparent 30%, rgba(0,0,0,.15)),
  linear-gradient(#17190f 0, #4b4b35 3%, #20251f 6%, #191d1d 13%, #5d6a72 15%, #25313f 18%, #667685 23%, #2c394a 26%, #6f7c88 30%, #2e3b4c 33%, #4b5971 37%, #8798aa 40%, #4b5d84 43%, #92a3b1 48%, #3c4a6c 51%, #94a5b3 55%, #3c4a6c 58%, #8fa0ac 62%, #3e4a66 65%, #8a99a2 68%, #3a4148 71%, #4a5058 75%, #262a2e 82%, #33373c 86%, #15171b 92%, #191a1d); }

.window { display: grid; grid-template-rows: 46px 48px 123px 722px 75px; margin-top: 1px; height: 1014px; background: #f1f1f1; overflow: hidden; }
.titlebar { display: flex; align-items: center; padding-left: 12px; background: #fff; color: #000; }
.titlebar h1 { margin: 0 auto 1px 5px; font: 18px "Open Sans", "Noto Sans", sans-serif; letter-spacing: -.5px; white-space: nowrap; }

.tabbar { display: flex; background: #ccc; }
.doc-tab { display: flex; align-items: center; width: 1317px; margin-top: 6px; padding: 0 10px 0 596px; gap: 7px; background: #f1f1f1; border-radius: 6px 6px 0 0; font: 18px "Liberation Sans", sans-serif; letter-spacing: .1px; }
.cube { margin-bottom: 2px; }
.doc-tab span { padding-top: 2px; }
.tab-x { margin-left: auto; }
.new-tab { width: 42px; margin: 6px 12px 0 6px; padding: 10px 11px; background: #bbb; border-radius: 6px 6px 0 0; }
.avatar { width: 37px; height: 37px; margin: 6px 0 0 13px; border-radius: 50%; background: #efefef; line-height: 37px; text-align: center; }

.ribbon { display: flex; background: #f1f1f1; border-bottom: 2px solid #ddd; height: 123px; }
.workspace { display: flex; justify-content: center; align-items: center; width: 165px; height: 92px; margin: 16px 10px 0 17px; padding-right: 2px; border: 2px solid #ddd; border-radius: 7px; font-weight: 700; font-size: 15.500px; }
.caret { display: inline-block; margin-left: 5px; border: 4.500px solid transparent; border-top: 7px solid #333; border-bottom: 0; vertical-align: 3px; }
.workspace .caret { margin-left: 8px; }
.ribbon-tabs { display: flex; height: 36px; line-height: 34px; text-align: center; }
.t1 { width: 112px; } .t2 { width: 146px; } .t3 { width: 166px; } .t4 { width: 124px; }
.t5 { width: 100px; height: 37px; margin-left: 18px; background: #cdeaf6; border-bottom: 5px solid #0696d7; color: #0696d7; font-weight: 700; }
.groups { display: flex; height: 86px; }
.group { border-right: 2px solid #ddd; height: 80px; }
.icons { display: flex; height: 57px; justify-content: center; }
.icons svg { width: 64.500px; height: 57px; }
.label { padding-top: 6px; text-align: center; white-space: nowrap; line-height: 20px; font-size: 15.700px; }
.create { width: 400px; } .create .label { padding-right: 7px; }
.modify { width: 210px; } .modify .icons { padding-left: 4px; } .modify .label { padding-right: 3px; letter-spacing: .1px; }
.constraints { width: 533px; } .constraints .label { padding-right: 5px; letter-spacing: .2px; }
.inspect { width: 118px; } .insert { width: 104px; }
.select { width: 115.500px; border: 0; } .select .label { padding-right: 4px; }
.finish { width: 155px; height: 89px; margin-top: -3px; padding-top: 3px; background: #cdeaf6; border: 0; }

.canvas { position: relative; background: #fff; }
.sketch { width: 1889px; height: 722px; }
.go { fill: none; stroke: #8b9396; stroke-width: 5; stroke-linejoin: round; stroke-linecap: round; }
.gi { fill: none; stroke: #ccd4d7; stroke-width: 2; }
.strong { filter: brightness(.5); }
.ruler { fill: #777; font-family: "Open Sans", sans-serif; }
.browser { position: absolute; left: 6px; top: 6px; width: 450px; }
.panel-head { display: flex; align-items: center; height: 37px; padding: 0 1px 0 6px; background: #f1f1f1; border: 2px solid #c4c4c4; color: #666; }
.panel-head span { margin: 0 auto 0 13px; }
.grip { width: 5px; height: 16px; margin-left: 10px; border: solid #888; border-width: 0 1px 0 1.500px; }
.comments { position: absolute; left: 6px; top: 678px; width: 450px; border-top: 0; padding-left: 35px; }
.comments span { margin-left: 0; padding-top: 2px; letter-spacing: -.2px; }
.tree { list-style: none; padding-top: 9px; font-family: "Liberation Sans", sans-serif; }
.tree li { display: flex; align-items: center; height: 30px; margin-bottom: 6px; }
.node { display: flex; align-items: center; height: 30px; background: #f1f1f1; white-space: nowrap; }
.r1 { padding-left: 25px; gap: 11px; } .r1 .node { width: 222px; padding-left: 5px; gap: 8px; }
.picked { display: flex; align-items: center; gap: 20px; width: 148px; height: 24px; padding-left: 4px; background: #999; color: #fff; font-size: 16px; }
.r1 .node > svg:last-child { margin-left: -3px; }
.r2, .r3, .r4 { padding-left: 54px; gap: 13.500px; } .r5 { padding-left: 52px; gap: 11.500px; } .r6 { padding-left: 108px; }
.r2 .node, .r3 .node { gap: 21px; padding-left: 4px; } .r2 .node { width: 200px; } .r3 .node { width: 165px; gap: 20px; }
.r4 .node { gap: 13px; width: 142px; padding-left: 4px; } .r4 span { margin-left: 7px; } .r5 .node { gap: 11px; width: 172px; padding-left: 4px; }
.r6 .node { gap: 9px; width: 160px; padding-left: 5px; }
.dashed { display: flex; align-items: center; gap: 20px; height: 28px; padding: 0 0 2px 3px; width: 130px; background: repeating-linear-gradient(125deg, #7f93b5 0 3px, transparent 3px 8px) 0 22px / 100% 5px no-repeat; }
.r6 .dashed { width: 122px; padding-left: 4px; }
.viewcube { position: absolute; left: 1786px; top: 22px; }
.viewcube text { font-family: Roboto, sans-serif; }
.palette { position: absolute; left: 1850px; top: 127px; width: 33px; height: 263px; padding: 12px 3px 0 0; background: #f1f1f1; display: flex; flex-direction: column; align-items: center; gap: 7px; font-size: 15.500px; }
.palette span { writing-mode: vertical-rl; line-height: 20px; white-space: nowrap; letter-spacing: -.05px; }
.navbar { position: absolute; left: 755px; top: 679px; width: 380px; height: 36px; display: flex; background: #f1f1f1; }
.warning { position: absolute; left: 1404px; top: 543px; width: 478px; height: 142px; display: flex; padding: 20px 0 0 13px; gap: 14px; border: 1px solid #ddd; border-radius: 3px; background: linear-gradient(#e6e6e6, #c9c9c9); color: #111; font-family: "DejaVu Sans Condensed", "DejaVu Sans", sans-serif; font-stretch: condensed; }
.warning h2 { font-size: 19.500px; font-weight: 700; line-height: 22px; letter-spacing: 0; }
.warning p { margin-top: 12px; font-size: 16px; line-height: 20px; letter-spacing: -.1px; white-space: nowrap; }
.warning a { display: block; margin-top: 11px; font-size: 16px; line-height: 20px; letter-spacing: .3px; color: #2222f4; text-decoration: underline; }
.mini-warn { position: absolute; left: 1849px; top: 686px; }
.timeline { display: flex; align-items: flex-start; border-top: 3px solid #ccc; background: #f1f1f1; }
.tl-gear { margin: 24px 19px 0 auto; }

.taskbar { grid-column: 1 / -1; display: flex; background: #1c1c1c; color: #fff; font-family: "Open Sans", "Noto Sans", sans-serif; }
.search { display: flex; align-items: center; gap: 17px; width: 516px; padding: 0 16px; background: #333; border: 2px solid #5c5c5c; font-size: 21px; color: #ddd; }
.search span { padding-top: 3px; letter-spacing: -.15px; }
.task-active { width: 73px; padding: 12px 18px; background: #4a4a4a; border-bottom: 3px solid #ff9aa2; }
.task-active text { font-family: Roboto, sans-serif; }
.tray { display: flex; align-items: center; margin-left: auto; font-size: 17px; }
.lang { width: 46px; padding-left: 2px; letter-spacing: -.5px; }
.clock { display: flex; flex-direction: column; align-items: center; width: 114px; margin: 0 19px 0 0; line-height: 28px; letter-spacing: .15px; }
.peek { width: 2px; height: 60px; margin: 0 6px 0 29px; background: #666; }
```
